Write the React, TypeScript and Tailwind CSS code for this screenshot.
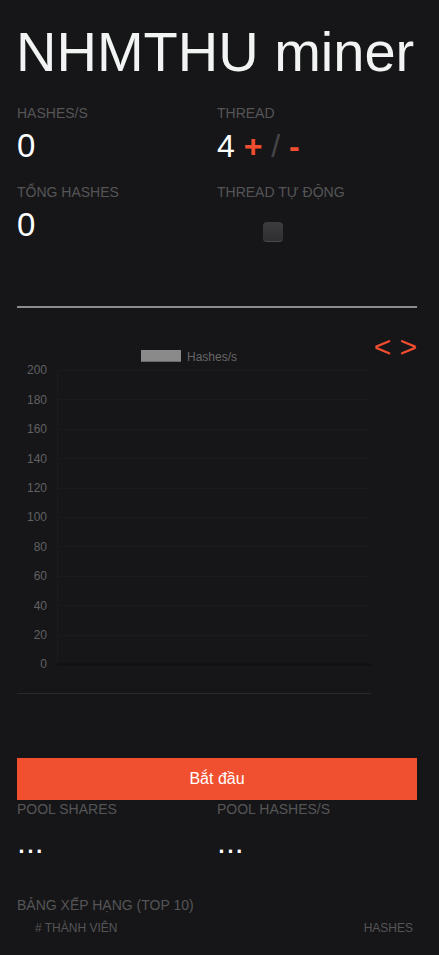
import React from "react";

const LABEL = "text-[14px] leading-[16px] text-[#555557] uppercase";

function Chart() {
  const ticks = [200, 180, 160, 140, 120, 100, 80, 60, 40, 20, 0];
  return (
    <svg width={355} height={360} className="block shrink-0" style={{ fontFamily: '"Liberation Sans", Arial, sans-serif' }}>
      <rect x={124} y={16} width={40} height={12} fill="#8a8a8a" />
      <line x1={124} y1={27.5} x2={164} y2={27.5} stroke="#6a6a6a" strokeWidth={1} />
      <text x={170} y={27} fontSize={12} fill="#666668">Hashes/s</text>
      <line x1={40.5} y1={36} x2={40.5} y2={330} stroke="#1c1c1e" strokeWidth={1} />
      {ticks.map((t, i) => {
        const y = 36 + i * 29.4;
        return (
          <g key={t}>
            <line x1={40} y1={Math.round(y) + 0.5} x2={354} y2={Math.round(y) + 0.5} stroke={t === 0 ? "#0f0f11" : "#1b1b1d"} strokeWidth={t === 0 ? 2 : 1} />
            <text x={30} y={y + 4.3} fontSize={12} fill="#606062" textAnchor="end">{t}</text>
          </g>
        );
      })}
      <line x1={0} y1={359.5} x2={354} y2={359.5} stroke="#2a2a2c" strokeWidth={1} />
    </svg>
  );
}

export default function App() {
  return (
    <div className="min-h-[955px] w-full bg-[#161618]" style={{ fontFamily: '"Liberation Sans", Arial, sans-serif' }}>
      <div className="ml-[17px] w-[400px] pt-[20px] pb-[20px]">
        <h1 className="text-[56px] leading-[64px] text-[#f2f3f3] font-normal -ml-[1px]">NHMTHU miner</h1>

        <div className="mt-[21px] grid grid-cols-2 gap-y-[18px]">
          <div>
            <div className={LABEL}>Hashes/s</div>
            <div className="mt-[5px] text-[33px] leading-[40px] text-white">0</div>
          </div>
          <div>
            <div className={LABEL}>Thread</div>
            <div className="mt-[5px] text-[32px] leading-[40px] text-white">
              <span>4</span> <span className="font-bold text-[#f04e30]">+</span>{" "}
              <span className="text-[#444446]">/</span>{" "}
              <span className="font-bold text-[#f04e30]">-</span>
            </div>
          </div>
          <div>
            <div className={LABEL}>Tổng hashes</div>
            <div className="mt-[5px] text-[33px] leading-[40px] text-white">0</div>
          </div>
          <div>
            <div className={LABEL}>Thread tự động</div>
            <div className="mt-[5px] h-[40px] pt-[17px]">
              <div className="ml-[46px] h-[20px] w-[20px] rounded-[4px] bg-gradient-to-b from-[#3c3c3e] to-[#2f2f31] border-b border-[#4a4a4c]" />
            </div>
          </div>
        </div>

        <div className="mt-[61px] h-[2px] bg-[#8c8c8c]" />

        <div className="mt-[26px] flex">
          <Chart />
          <div className="flex-1 text-right text-[30px] leading-[32px] text-[#f04e30] -mt-[3px]">&lt; &gt;</div>
        </div>

        <button className="mt-[64px] flex h-[42px] w-full items-center justify-center bg-[#f04f30] text-[16px] text-white">
          Bắt đầu
        </button>

        <div className="mt-[1px] grid grid-cols-2">
          <div>
            <div className={LABEL}>Pool shares</div>
            <div className="mt-[5px] text-[32px] leading-[40px] text-white">...</div>
          </div>
          <div>
            <div className={LABEL}>Pool hashes/s</div>
            <div className="mt-[5px] text-[32px] leading-[40px] text-white">...</div>
          </div>
        </div>

        <div className={"mt-[35px] " + LABEL}>Bảng xếp hạng (top 10)</div>
        <div className="mt-[8px] flex justify-between text-[12px] leading-[14px] text-[#555557] uppercase">
          <span className="pl-[18px]"># Thành viên</span>
          <span className="pr-[4px]">Hashes</span>
        </div>
      </div>
    </div>
  );
}
